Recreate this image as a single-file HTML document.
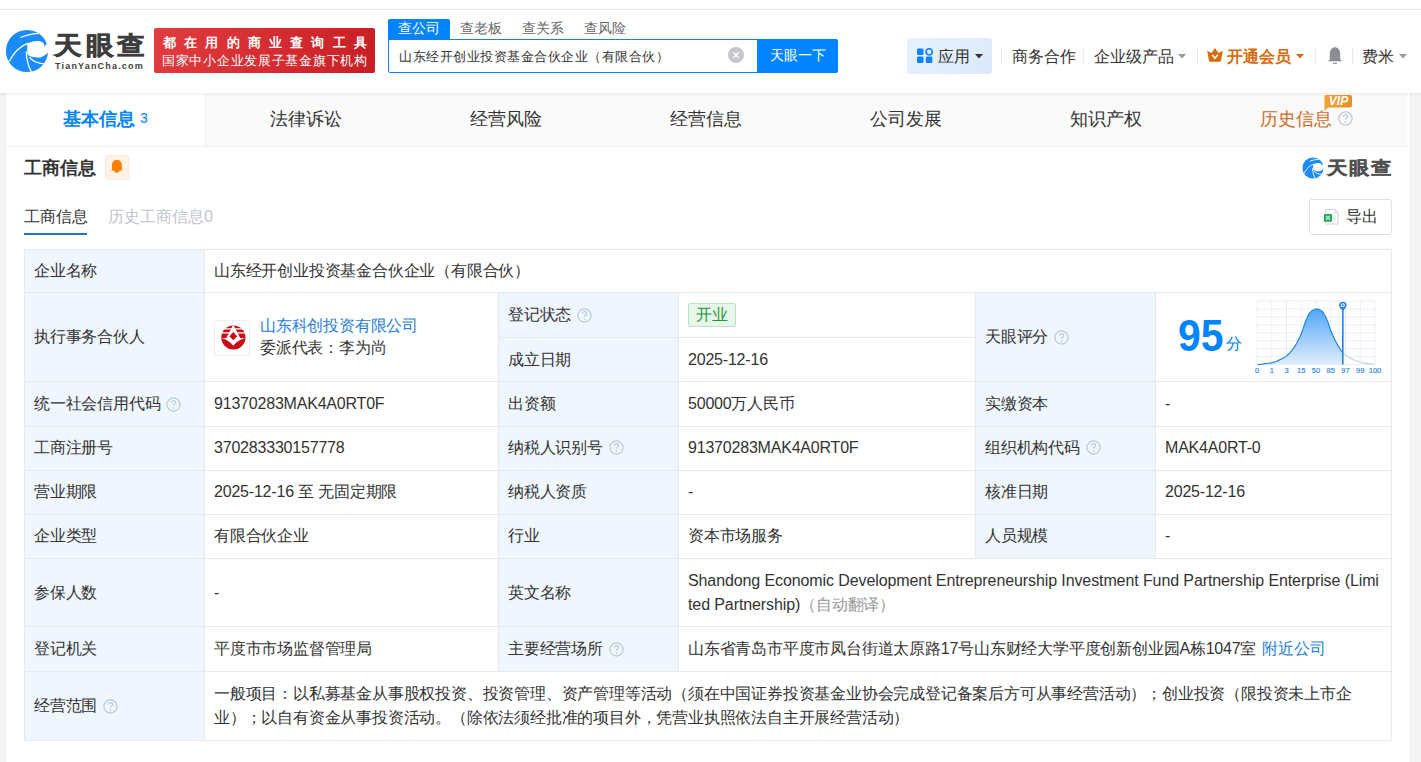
<!DOCTYPE html>
<html><head><meta charset="utf-8">
<style>
*{margin:0;padding:0;box-sizing:border-box}
html,body{width:1421px;height:762px;overflow:hidden;background:#f5f5f5;font-family:"Liberation Sans",sans-serif;color:#333}
.a{position:absolute;white-space:nowrap}
#hdr{position:absolute;left:0;top:0;width:1421px;height:93px;background:#fff;box-shadow:0 1px 4px rgba(0,0,0,.06)}
#topline{position:absolute;left:0;top:9px;width:1421px;height:1px;background:#e8e8e8}
#card{position:absolute;left:6px;top:93px;width:1404px;height:669px;background:#fff}
#rstrip{position:absolute;left:1410px;top:93px;width:11px;height:669px;background:#f5f5f5;border-left:1px solid #ebebeb}
#lstrip{position:absolute;left:5px;top:93px;width:1px;height:669px;background:#ececec}
.tabbar{position:absolute;left:6px;top:93px;width:1401px;height:54px;background:#fafafa;border-bottom:1px solid #f0f0f0}
.tab{position:absolute;top:0;height:53px;width:200px;text-align:center;font-size:18px;line-height:53px;color:#333}
.c{position:absolute;border:1px solid #e3eaf0;font-size:16px;letter-spacing:-0.2px;line-height:24px;color:#333;white-space:nowrap;display:flex;align-items:center;padding-left:9px}
.plogo{width:36px;height:36px;border:1px solid #eee;border-radius:4px;display:flex;align-items:center;justify-content:center;margin-right:10px;margin-top:1px}
.pinfo{line-height:22px}
.tag{display:inline-block;height:24px;line-height:22px;padding:0 7px;background:#e7f7ea;border:1px solid #b8e5c2;border-radius:2px;color:#1d9a3c}
.ml{line-height:24px}
.qi{margin-left:6px;flex:none}
.l{background:#eff6fd}
.q{display:inline-block;width:14px;height:14px;border:1px solid #b9cde1;border-radius:50%;font-size:10px;line-height:12px;text-align:center;color:#b9cde1;vertical-align:middle}
</style></head><body>
<div id="hdr"></div>
<div id="topline"></div>

<!-- logo -->
<svg class="a" style="left:3px;top:27px" width="48" height="48" viewBox="0 0 48 48">
<circle cx="24" cy="24" r="21.1" fill="#1a8cff"/>
<path d="M24.9,16.3 C29,14.5 32.5,13.8 35.2,14.1 C38,14.4 40.5,15.5 41.2,17.2 Q41.6,18.6 41.1,20.4 Q42.6,18.2 43.8,16.6 L47,16 L47,22.4 C45.6,25.2 44,26.8 42.6,27.6 C41,29 39,30.2 37.4,30.4 C34,30.7 31.5,30.4 30.1,30 C28.5,29.6 27.2,29.3 26.4,28.8 C24.8,27.8 24.2,26.9 24.2,25.9 L24.2,17.8 Z" fill="#fff"/>
<g fill="none" stroke="#fff" stroke-width="1.25">
<path d="M6.4,34.2 Q11,26 14.6,22.8 Q19,18.5 25.2,16.2"/>
<path d="M17.4,10.5 Q25,7.2 35.5,6.4"/>
<path d="M23.2,24.5 Q23.4,31 24.9,36.2 Q26,40.5 28.4,45"/>
<path d="M26.4,30.2 Q29,33.5 32.3,34.8 Q36,36.5 41.5,37"/>
</g>
</svg>
<div class="a" style="left:54px;top:30.5px;font-size:28px;line-height:34px;font-weight:bold;color:#3d3d3d;letter-spacing:3.5px;-webkit-text-stroke:0.7px #3d3d3d;transform:scaleY(0.9);transform-origin:0 0">天眼查</div>
<div class="a" style="left:55px;top:60px;font-size:9px;line-height:12px;font-weight:bold;color:#404040;letter-spacing:1.18px">TianYanCha.com</div>

<!-- red banner -->
<div class="a" style="left:154px;top:28px;width:221px;height:45px;border-radius:2px;background:linear-gradient(100deg,#e23c3f,#c81f24)"></div>
<div class="a" style="left:163px;top:34px;font-size:13px;line-height:17px;color:#fff;font-weight:bold;letter-spacing:8.2px">都在用的商业查询工具</div>
<div class="a" style="left:162px;top:52px;font-size:13px;letter-spacing:0.72px;line-height:17px;color:#fff">国家中小企业发展子基金旗下机构</div>

<!-- search -->
<div class="a" style="left:388px;top:19px;width:62px;height:21px;background:#0084ff;border-radius:2px 2px 0 0"></div>
<div class="a" style="left:398px;top:18px;font-size:14px;line-height:20px;color:#fff">查公司</div>
<div class="a" style="left:460px;top:18px;font-size:14px;line-height:20px;color:#666">查老板</div>
<div class="a" style="left:522px;top:18px;font-size:14px;line-height:20px;color:#666">查关系</div>
<div class="a" style="left:584px;top:18px;font-size:14px;line-height:20px;color:#666">查风险</div>
<div class="a" style="left:388px;top:39px;width:372px;height:34px;border:1px solid #1a7fe0;border-radius:0 0 0 2px;background:#fff"></div>
<div class="a" style="left:399px;top:47px;font-size:13px;letter-spacing:0.5px;line-height:20px;color:#333">山东经开创业投资基金合伙企业（有限合伙）</div>
<div class="a" style="left:728px;top:47px;width:16px;height:16px;border-radius:50%;background:#c5c6ca"></div>
<svg class="a" style="left:728px;top:47px" width="16" height="16"><path d="M5,5 L11,11 M11,5 L5,11" stroke="#fff" stroke-width="1.3"/></svg>
<div class="a" style="left:757px;top:39px;width:81px;height:34px;background:#0084ff;border-radius:0 2px 2px 0"></div>
<div class="a" style="left:770px;top:45px;font-size:14px;line-height:20px;color:#fff">天眼一下</div>

<!-- right nav -->
<div class="a" style="left:907px;top:38px;width:85px;height:36px;background:linear-gradient(135deg,#e6f1fd 0%,#e1edfc 60%,#dbe8fb 100%);border-radius:3px"></div>
<svg class="a" style="left:917px;top:48px" width="16" height="16" viewBox="0 0 16 16">
<rect x="0" y="0.5" width="6.5" height="6.5" rx="1.2" fill="#0a84ff"/>
<circle cx="12.2" cy="3.8" r="3.1" fill="none" stroke="#0a84ff" stroke-width="1.5"/>
<rect x="0" y="8.5" width="6.5" height="6.5" rx="1.2" fill="#0a84ff"/>
<rect x="8.8" y="8.5" width="6.5" height="6.5" rx="1.2" fill="#0a84ff"/>
</svg>
<div class="a" style="left:938px;top:45.5px;font-size:16px;line-height:22px;color:#333">应用</div>
<svg class="a" style="left:975px;top:54px" width="8" height="5"><path d="M0,0 L8,0 L4,4.5Z" fill="#333"/></svg>
<div class="a" style="left:1001px;top:49px;width:1px;height:14px;background:#e8e8e8"></div>
<div class="a" style="left:1012px;top:45.5px;font-size:16px;line-height:22px;color:#333">商务合作</div>
<div class="a" style="left:1083px;top:49px;width:1px;height:14px;background:#e8e8e8"></div>
<div class="a" style="left:1094px;top:45.5px;font-size:16px;line-height:22px;color:#333">企业级产品</div>
<svg class="a" style="left:1178px;top:54px" width="8" height="5"><path d="M0,0 L8,0 L4,4.5Z" fill="#999"/></svg>
<div class="a" style="left:1197px;top:49px;width:1px;height:14px;background:#e8e8e8"></div>
<svg class="a" style="left:1207px;top:48px" width="16" height="14" viewBox="0 0 16 14">
<path d="M0.2,2.8 L4.5,5 L8,0 L11.5,5 L15.8,2.8 L14.2,12 Q14,13.8 12.5,13.8 L3.5,13.8 Q2,13.8 1.8,12 Z" fill="#d96a0b"/>
<path d="M5.2,6.8 L8,10.2 L10.8,6.8" fill="none" stroke="#fff" stroke-width="1.6"/>
</svg>
<div class="a" style="left:1227px;top:45.5px;font-size:16px;line-height:22px;color:#d96a0b;font-weight:bold">开通会员</div>
<svg class="a" style="left:1296px;top:54px" width="8" height="5"><path d="M0,0 L8,0 L4,4.5Z" fill="#d96a0b"/></svg>
<div class="a" style="left:1315px;top:49px;width:1px;height:14px;background:#e8e8e8"></div>
<svg class="a" style="left:1327px;top:46px" width="16" height="19" viewBox="0 0 16 19">
<path d="M8,0.5 L8.8,1.6 C12,2.2 13.2,5 13.2,8 L13.2,13.5 L15.2,15.3 L0.8,15.3 L2.8,13.5 L2.8,8 C2.8,5 4,2.2 7.2,1.6 Z" fill="#8a8e94"/>
<rect x="6.2" y="16.6" width="3.6" height="1.3" fill="#8a8e94"/>
</svg>
<div class="a" style="left:1352px;top:49px;width:1px;height:14px;background:#e8e8e8"></div>
<div class="a" style="left:1362px;top:45.5px;font-size:16px;line-height:22px;color:#333">费米</div>
<svg class="a" style="left:1399px;top:54px" width="8" height="5"><path d="M0,0 L8,0 L4,4.5Z" fill="#999"/></svg>

<!-- content card -->
<div id="lstrip"></div>
<div id="card"></div>
<div id="rstrip"></div>
<div class="tabbar">
 <div class="tab" style="left:0;background:#fff;border-right:1px solid #f0f0f0;width:200px;color:#0084ff;font-weight:bold">基本信息<span style="font-size:14px;font-weight:normal;margin-left:5px;position:relative;top:-2px">3</span></div>
 <div class="tab" style="left:200px">法律诉讼</div>
 <div class="tab" style="left:400px">经营风险</div>
 <div class="tab" style="left:600px">经营信息</div>
 <div class="tab" style="left:800px">公司发展</div>
 <div class="tab" style="left:1000px">知识产权</div>
 <div class="tab" style="left:1200px;color:#d2691e">历史信息<svg width="15" height="15" viewBox="0 0 15 15" style="margin-left:6px;vertical-align:-1px"><circle cx="7.5" cy="7.5" r="6.6" fill="none" stroke="#c3c8ce" stroke-width="1.3"/><path d="M5.4,5.6 Q5.5,3.6 7.5,3.6 Q9.6,3.6 9.6,5.5 Q9.6,6.7 8.3,7.3 Q7.5,7.7 7.5,8.8" fill="none" stroke="#c3c8ce" stroke-width="1.2"/><circle cx="7.5" cy="10.9" r="0.8" fill="#c3c8ce"/></svg></div>
</div>
<!-- VIP badge -->
<svg class="a" style="left:1322px;top:94px" width="31" height="18" viewBox="0 0 31 18">
<defs><linearGradient id="vg" x1="0" y1="0" x2="1" y2="0"><stop offset="0" stop-color="#f3a132"/><stop offset="1" stop-color="#e6902a"/></linearGradient></defs>
<path d="M4,1 L28,1 Q30,1 30,3 L30,11.5 Q30,13.5 28,13.5 L6,13.5 L2.5,17 L2.5,3 Q2.5,1 4,1Z" fill="url(#vg)"/>
<text x="16.5" y="11.2" font-family="Liberation Sans" font-size="12" font-weight="bold" font-style="italic" fill="#fff" text-anchor="middle">VIP</text>
</svg>

<!-- section title -->
<div class="a" style="left:24px;top:155.5px;font-size:18px;line-height:24px;font-weight:bold;color:#333">工商信息</div>
<div class="a" style="left:105px;top:155px;width:24px;height:25px;background:#fff3e8;border:1px solid #fbeadc;border-radius:3px"></div>
<svg class="a" style="left:110px;top:159px" width="14" height="15" viewBox="0 0 14 15">
<path d="M6.9,0.8 C10.3,0.9 11.9,3.5 11.9,6.5 L11.9,10.6 L12.8,11.6 L10,11.6 Q8.8,13.8 6.9,13.8 Q5,13.8 3.8,11.6 L1,11.6 L2,10.6 L2,6.5 C2,3.5 3.6,0.9 6.9,0.8Z" fill="#ff8000"/>
</svg>

<!-- small logo right -->
<svg class="a" style="left:1301px;top:156px" width="24" height="24" viewBox="0 0 48 48">
<circle cx="24" cy="24" r="21.1" fill="#1a8cff"/>
<path d="M24.9,16.3 C29,14.5 32.5,13.8 35.2,14.1 C38,14.4 40.5,15.5 41.2,17.2 Q41.6,18.6 41.1,20.4 Q42.6,18.2 43.8,16.6 L47,16 L47,22.4 C45.6,25.2 44,26.8 42.6,27.6 C41,29 39,30.2 37.4,30.4 C34,30.7 31.5,30.4 30.1,30 C28.5,29.6 27.2,29.3 26.4,28.8 C24.8,27.8 24.2,26.9 24.2,25.9 L24.2,17.8 Z" fill="#fff"/>
<g fill="none" stroke="#fff" stroke-width="1.8">
<path d="M6.4,34.2 Q11,26 14.6,22.8 Q19,18.5 25.2,16.2"/>
<path d="M17.4,10.5 Q25,7.2 35.5,6.4"/>
<path d="M23.2,24.5 Q23.4,31 24.9,36.2 Q26,40.5 28.4,45"/>
<path d="M26.4,30.2 Q29,33.5 32.3,34.8 Q36,36.5 41.5,37"/>
</g>
</svg>
<div class="a" style="left:1327px;top:156.5px;font-size:20px;line-height:24px;font-weight:bold;color:#505050;letter-spacing:2.2px;-webkit-text-stroke:0.4px #505050;transform:scaleY(0.88);transform-origin:0 0">天眼查</div>

<!-- sub tabs -->
<div class="a" style="left:24px;top:205.5px;font-size:16px;line-height:22px;color:#333">工商信息</div>
<div class="a" style="left:24px;top:233px;width:63px;height:2px;background:#1f74cc"></div>
<div class="a" style="left:108px;top:205.5px;font-size:16px;line-height:22px;color:#c0c4cc">历史工商信息0</div>

<!-- export -->
<div class="a" style="left:1309px;top:199px;width:83px;height:36px;border:1px solid #dde1e6;border-radius:3px;background:#fff"></div>
<svg class="a" style="left:1323px;top:208px" width="17" height="18" viewBox="0 0 17 18">
<path d="M2.8,1.6 L12,1.6 L15,4.6 L15,16 L2.8,16 Z" fill="#fff" stroke="#cfd2d6" stroke-width="1"/>
<path d="M12,1.6 L12,4.6 L15,4.6" fill="#e8eaec" stroke="#cfd2d6" stroke-width="0.8"/>
<rect x="1" y="5.9" width="8" height="7.8" rx="0.8" fill="#26a460"/>
<path d="M3,7.9 L7,11.7 M7,7.9 L3,11.7" stroke="#c8f5dc" stroke-width="1.2"/>
<path d="M10.3,8.6 L12.6,8.6 M10.3,10.4 L12.6,10.4 M10.3,12.2 L12.6,12.2" stroke="#d6d8db" stroke-width="1"/>
</svg>
<div class="a" style="left:1346px;top:206px;font-size:16px;line-height:22px;color:#333">导出</div>

<div class="a" style="left:0;top:93px;width:1421px;height:5px;background:linear-gradient(rgba(0,0,0,0.05),rgba(0,0,0,0.012) 60%,rgba(0,0,0,0))"></div>
<!-- TABLE -->
<div class="c l" style="left:24px;top:249px;width:181px;height:44px;">企业名称</div>
<div class="c" style="left:204px;top:249px;width:1188px;height:44px;">山东经开创业投资基金合伙企业（有限合伙）</div>
<div class="c l" style="left:24px;top:292px;width:181px;height:90px;">执行事务合伙人</div>
<div class="c" style="left:204px;top:292px;width:295px;height:90px;"><div class="plogo"></div><div class="pinfo"><div style="color:#1f80dc">山东科创投资有限公司</div><div>委派代表：李为尚</div></div></div>
<div class="c l" style="left:498px;top:292px;width:181px;height:46px;">登记状态 <svg class="qi" width="15" height="15" viewBox="0 0 15 15"><circle cx="7.5" cy="7.5" r="6.6" fill="none" stroke="#b6cadd" stroke-width="1.2"/><path d="M5.4,5.6 Q5.5,3.6 7.5,3.6 Q9.6,3.6 9.6,5.5 Q9.6,6.7 8.3,7.3 Q7.5,7.7 7.5,8.8" fill="none" stroke="#b6cadd" stroke-width="1.1"/><circle cx="7.5" cy="10.9" r="0.75" fill="#b6cadd"/></svg></div>
<div class="c" style="left:678px;top:292px;width:298px;height:46px;"><span class="tag">开业</span></div>
<div class="c l" style="left:975px;top:292px;width:181px;height:90px;">天眼评分 <svg class="qi" width="15" height="15" viewBox="0 0 15 15"><circle cx="7.5" cy="7.5" r="6.6" fill="none" stroke="#b6cadd" stroke-width="1.2"/><path d="M5.4,5.6 Q5.5,3.6 7.5,3.6 Q9.6,3.6 9.6,5.5 Q9.6,6.7 8.3,7.3 Q7.5,7.7 7.5,8.8" fill="none" stroke="#b6cadd" stroke-width="1.1"/><circle cx="7.5" cy="10.9" r="0.75" fill="#b6cadd"/></svg></div>
<div class="c" style="left:1155px;top:292px;width:237px;height:90px;"></div>
<div class="c l" style="left:498px;top:337px;width:181px;height:45px;">成立日期</div>
<div class="c" style="left:678px;top:337px;width:298px;height:45px;">2025-12-16</div>
<div class="c l" style="left:24px;top:381px;width:181px;height:46px;">统一社会信用代码 <svg class="qi" width="15" height="15" viewBox="0 0 15 15"><circle cx="7.5" cy="7.5" r="6.6" fill="none" stroke="#b6cadd" stroke-width="1.2"/><path d="M5.4,5.6 Q5.5,3.6 7.5,3.6 Q9.6,3.6 9.6,5.5 Q9.6,6.7 8.3,7.3 Q7.5,7.7 7.5,8.8" fill="none" stroke="#b6cadd" stroke-width="1.1"/><circle cx="7.5" cy="10.9" r="0.75" fill="#b6cadd"/></svg></div>
<div class="c" style="left:204px;top:381px;width:295px;height:46px;">91370283MAK4A0RT0F</div>
<div class="c l" style="left:498px;top:381px;width:181px;height:46px;">出资额</div>
<div class="c" style="left:678px;top:381px;width:298px;height:46px;">50000万人民币</div>
<div class="c l" style="left:975px;top:381px;width:181px;height:46px;">实缴资本</div>
<div class="c" style="left:1155px;top:381px;width:237px;height:46px;">-</div>
<div class="c l" style="left:24px;top:426px;width:181px;height:45px;padding-bottom:2px;">工商注册号</div>
<div class="c" style="left:204px;top:426px;width:295px;height:45px;padding-bottom:2px;">370283330157778</div>
<div class="c l" style="left:498px;top:426px;width:181px;height:45px;padding-bottom:2px;">纳税人识别号 <svg class="qi" width="15" height="15" viewBox="0 0 15 15"><circle cx="7.5" cy="7.5" r="6.6" fill="none" stroke="#b6cadd" stroke-width="1.2"/><path d="M5.4,5.6 Q5.5,3.6 7.5,3.6 Q9.6,3.6 9.6,5.5 Q9.6,6.7 8.3,7.3 Q7.5,7.7 7.5,8.8" fill="none" stroke="#b6cadd" stroke-width="1.1"/><circle cx="7.5" cy="10.9" r="0.75" fill="#b6cadd"/></svg></div>
<div class="c" style="left:678px;top:426px;width:298px;height:45px;padding-bottom:2px;">91370283MAK4A0RT0F</div>
<div class="c l" style="left:975px;top:426px;width:181px;height:45px;padding-bottom:2px;">组织机构代码 <svg class="qi" width="15" height="15" viewBox="0 0 15 15"><circle cx="7.5" cy="7.5" r="6.6" fill="none" stroke="#b6cadd" stroke-width="1.2"/><path d="M5.4,5.6 Q5.5,3.6 7.5,3.6 Q9.6,3.6 9.6,5.5 Q9.6,6.7 8.3,7.3 Q7.5,7.7 7.5,8.8" fill="none" stroke="#b6cadd" stroke-width="1.1"/><circle cx="7.5" cy="10.9" r="0.75" fill="#b6cadd"/></svg></div>
<div class="c" style="left:1155px;top:426px;width:237px;height:45px;padding-bottom:2px;">MAK4A0RT-0</div>
<div class="c l" style="left:24px;top:470px;width:181px;height:45px;padding-bottom:2px;">营业期限</div>
<div class="c" style="left:204px;top:470px;width:295px;height:45px;padding-bottom:2px;">2025-12-16 至 无固定期限</div>
<div class="c l" style="left:498px;top:470px;width:181px;height:45px;padding-bottom:2px;">纳税人资质</div>
<div class="c" style="left:678px;top:470px;width:298px;height:45px;padding-bottom:2px;">-</div>
<div class="c l" style="left:975px;top:470px;width:181px;height:45px;padding-bottom:2px;">核准日期</div>
<div class="c" style="left:1155px;top:470px;width:237px;height:45px;padding-bottom:2px;">2025-12-16</div>
<div class="c l" style="left:24px;top:514px;width:181px;height:45px;padding-bottom:2px;">企业类型</div>
<div class="c" style="left:204px;top:514px;width:295px;height:45px;padding-bottom:2px;">有限合伙企业</div>
<div class="c l" style="left:498px;top:514px;width:181px;height:45px;padding-bottom:2px;">行业</div>
<div class="c" style="left:678px;top:514px;width:298px;height:45px;padding-bottom:2px;">资本市场服务</div>
<div class="c l" style="left:975px;top:514px;width:181px;height:45px;padding-bottom:2px;">人员规模</div>
<div class="c" style="left:1155px;top:514px;width:237px;height:45px;padding-bottom:2px;">-</div>
<div class="c l" style="left:24px;top:558px;width:181px;height:69px;">参保人数</div>
<div class="c" style="left:204px;top:558px;width:295px;height:69px;">-</div>
<div class="c l" style="left:498px;top:558px;width:181px;height:69px;">英文名称</div>
<div class="c" style="left:678px;top:558px;width:714px;height:69px;"><div class="ml" style="letter-spacing:-0.1px">Shandong Economic Development Entrepreneurship Investment Fund Partnership Enterprise (Limi<br>ted Partnership)<span style="color:#999;letter-spacing:-0.2px">（自动翻译）</span></div></div>
<div class="c l" style="left:24px;top:626px;width:181px;height:46px;">登记机关</div>
<div class="c" style="left:204px;top:626px;width:295px;height:46px;">平度市市场监督管理局</div>
<div class="c l" style="left:498px;top:626px;width:181px;height:46px;">主要经营场所 <svg class="qi" width="15" height="15" viewBox="0 0 15 15"><circle cx="7.5" cy="7.5" r="6.6" fill="none" stroke="#b6cadd" stroke-width="1.2"/><path d="M5.4,5.6 Q5.5,3.6 7.5,3.6 Q9.6,3.6 9.6,5.5 Q9.6,6.7 8.3,7.3 Q7.5,7.7 7.5,8.8" fill="none" stroke="#b6cadd" stroke-width="1.1"/><circle cx="7.5" cy="10.9" r="0.75" fill="#b6cadd"/></svg></div>
<div class="c" style="left:678px;top:626px;width:714px;height:46px;">山东省青岛市平度市凤台街道太原路17号山东财经大学平度创新创业园A栋1047室 <span style="color:#1f80dc;margin-left:6px">附近公司</span></div>
<div class="c l" style="left:24px;top:671px;width:181px;height:70px;">经营范围 <svg class="qi" width="15" height="15" viewBox="0 0 15 15"><circle cx="7.5" cy="7.5" r="6.6" fill="none" stroke="#b6cadd" stroke-width="1.2"/><path d="M5.4,5.6 Q5.5,3.6 7.5,3.6 Q9.6,3.6 9.6,5.5 Q9.6,6.7 8.3,7.3 Q7.5,7.7 7.5,8.8" fill="none" stroke="#b6cadd" stroke-width="1.1"/><circle cx="7.5" cy="10.9" r="0.75" fill="#b6cadd"/></svg></div>
<div class="c" style="left:204px;top:671px;width:1188px;height:70px;"><div class="ml">一般项目：以私募基金从事股权投资、投资管理、资产管理等活动（须在中国证券投资基金业协会完成登记备案后方可从事经营活动）；创业投资（限投资未上市企<br>业）；以自有资金从事投资活动。（除依法须经批准的项目外，凭营业执照依法自主开展经营活动）</div></div>
<svg class="a" style="left:1250px;top:296px" width="136" height="80" viewBox="0 0 136 80">
<defs><linearGradient id="bg1" x1="0" y1="0" x2="0" y2="1"><stop offset="0" stop-color="#52a6f8"/><stop offset="1" stop-color="#e2eefc"/></linearGradient></defs>
<g stroke="#e9eff7" stroke-width="1"><line x1="7.00" y1="5" x2="7.00" y2="68.6"/><line x1="21.75" y1="5" x2="21.75" y2="68.6"/><line x1="36.50" y1="5" x2="36.50" y2="68.6"/><line x1="51.25" y1="5" x2="51.25" y2="68.6"/><line x1="66.00" y1="5" x2="66.00" y2="68.6"/><line x1="80.75" y1="5" x2="80.75" y2="68.6"/><line x1="95.50" y1="5" x2="95.50" y2="68.6"/><line x1="110.25" y1="5" x2="110.25" y2="68.6"/><line x1="125.00" y1="5" x2="125.00" y2="68.6"/><line x1="7" y1="5.00" x2="125" y2="5.00"/><line x1="7" y1="12.95" x2="125" y2="12.95"/><line x1="7" y1="20.90" x2="125" y2="20.90"/><line x1="7" y1="28.85" x2="125" y2="28.85"/><line x1="7" y1="36.80" x2="125" y2="36.80"/><line x1="7" y1="44.75" x2="125" y2="44.75"/><line x1="7" y1="52.70" x2="125" y2="52.70"/><line x1="7" y1="60.65" x2="125" y2="60.65"/><line x1="7" y1="68.60" x2="125" y2="68.60"/></g>
<path d="M7.35,68.6 L7.35,68.73 8.08,68.63 9.02,68.51 10.13,68.38 11.39,68.23 12.74,68.06 14.17,67.88 15.62,67.69 17.06,67.49 18.46,67.28 19.78,67.07 20.99,66.85 22.04,66.63 22.96,66.41 23.82,66.18 24.61,65.94 25.36,65.70 26.06,65.45 26.72,65.19 27.36,64.92 27.98,64.65 28.59,64.37 29.20,64.08 29.81,63.79 30.43,63.48 31.05,63.18 31.66,62.89 32.25,62.59 32.82,62.30 33.38,62.00 33.94,61.68 34.49,61.35 35.04,61.00 35.58,60.62 36.13,60.21 36.69,59.77 37.25,59.29 37.82,58.76 38.41,58.21 38.99,57.61 39.58,56.99 40.17,56.35 40.76,55.68 41.34,54.99 41.91,54.29 42.48,53.58 43.03,52.86 43.56,52.14 44.07,51.42 44.57,50.68 45.06,49.91 45.54,49.12 46.01,48.31 46.48,47.49 46.92,46.66 47.36,45.84 47.78,45.02 48.19,44.22 48.58,43.44 48.96,42.69 49.32,41.97 49.65,41.29 49.96,40.65 50.25,40.04 50.52,39.45 50.78,38.87 51.02,38.30 51.26,37.73 51.49,37.15 51.73,36.56 51.97,35.95 52.21,35.31 52.47,34.63 52.72,33.91 52.98,33.16 53.23,32.39 53.48,31.60 53.72,30.79 53.97,29.97 54.23,29.15 54.49,28.33 54.75,27.52 55.03,26.72 55.31,25.94 55.61,25.18 55.92,24.43 56.23,23.67 56.54,22.90 56.86,22.13 57.18,21.37 57.52,20.63 57.86,19.90 58.22,19.20 58.59,18.53 58.98,17.90 59.38,17.32 59.81,16.79 60.26,16.30 60.74,15.83 61.24,15.39 61.75,14.98 62.29,14.61 62.83,14.26 63.38,13.96 63.93,13.70 64.48,13.48 65.03,13.31 65.58,13.19 66.11,13.12 66.64,13.10 67.17,13.12 67.72,13.19 68.26,13.31 68.81,13.47 69.35,13.67 69.89,13.92 70.42,14.20 70.94,14.53 71.44,14.90 71.93,15.30 72.40,15.74 72.85,16.23 73.29,16.78 73.72,17.38 74.13,18.03 74.54,18.72 74.93,19.45 75.31,20.20 75.69,20.97 76.06,21.75 76.42,22.55 76.77,23.34 77.12,24.13 77.47,24.94 77.79,25.77 78.10,26.63 78.41,27.52 78.70,28.41 78.99,29.32 79.28,30.22 79.57,31.13 79.87,32.03 80.17,32.92 80.48,33.78 80.80,34.63 81.13,35.46 81.47,36.29 81.81,37.11 82.16,37.93 82.51,38.74 82.86,39.55 83.22,40.34 83.58,41.12 83.93,41.88 84.29,42.63 84.64,43.36 84.99,44.07 85.35,44.76 85.70,45.44 86.06,46.10 86.41,46.75 86.77,47.39 87.13,48.01 87.48,48.61 87.83,49.20 88.18,49.78 88.52,50.34 88.86,50.88 89.19,51.42 89.51,51.93 89.80,52.41 90.07,52.88 90.34,53.33 90.60,53.76 90.86,54.18 91.14,54.60 91.43,55.01 91.74,55.42 92.08,55.83 92.45,56.24 92.80,56.60 L92.8,68.6 Z" fill="url(#bg1)"/>
<polyline points="7.35,68.73 8.08,68.63 9.02,68.51 10.13,68.38 11.39,68.23 12.74,68.06 14.17,67.88 15.62,67.69 17.06,67.49 18.46,67.28 19.78,67.07 20.99,66.85 22.04,66.63 22.96,66.41 23.82,66.18 24.61,65.94 25.36,65.70 26.06,65.45 26.72,65.19 27.36,64.92 27.98,64.65 28.59,64.37 29.20,64.08 29.81,63.79 30.43,63.48 31.05,63.18 31.66,62.89 32.25,62.59 32.82,62.30 33.38,62.00 33.94,61.68 34.49,61.35 35.04,61.00 35.58,60.62 36.13,60.21 36.69,59.77 37.25,59.29 37.82,58.76 38.41,58.21 38.99,57.61 39.58,56.99 40.17,56.35 40.76,55.68 41.34,54.99 41.91,54.29 42.48,53.58 43.03,52.86 43.56,52.14 44.07,51.42 44.57,50.68 45.06,49.91 45.54,49.12 46.01,48.31 46.48,47.49 46.92,46.66 47.36,45.84 47.78,45.02 48.19,44.22 48.58,43.44 48.96,42.69 49.32,41.97 49.65,41.29 49.96,40.65 50.25,40.04 50.52,39.45 50.78,38.87 51.02,38.30 51.26,37.73 51.49,37.15 51.73,36.56 51.97,35.95 52.21,35.31 52.47,34.63 52.72,33.91 52.98,33.16 53.23,32.39 53.48,31.60 53.72,30.79 53.97,29.97 54.23,29.15 54.49,28.33 54.75,27.52 55.03,26.72 55.31,25.94 55.61,25.18 55.92,24.43 56.23,23.67 56.54,22.90 56.86,22.13 57.18,21.37 57.52,20.63 57.86,19.90 58.22,19.20 58.59,18.53 58.98,17.90 59.38,17.32 59.81,16.79 60.26,16.30 60.74,15.83 61.24,15.39 61.75,14.98 62.29,14.61 62.83,14.26 63.38,13.96 63.93,13.70 64.48,13.48 65.03,13.31 65.58,13.19 66.11,13.12 66.64,13.10 67.17,13.12 67.72,13.19 68.26,13.31 68.81,13.47 69.35,13.67 69.89,13.92 70.42,14.20 70.94,14.53 71.44,14.90 71.93,15.30 72.40,15.74 72.85,16.23 73.29,16.78 73.72,17.38 74.13,18.03 74.54,18.72 74.93,19.45 75.31,20.20 75.69,20.97 76.06,21.75 76.42,22.55 76.77,23.34 77.12,24.13 77.47,24.94 77.79,25.77 78.10,26.63 78.41,27.52 78.70,28.41 78.99,29.32 79.28,30.22 79.57,31.13 79.87,32.03 80.17,32.92 80.48,33.78 80.80,34.63 81.13,35.46 81.47,36.29 81.81,37.11 82.16,37.93 82.51,38.74 82.86,39.55 83.22,40.34 83.58,41.12 83.93,41.88 84.29,42.63 84.64,43.36 84.99,44.07 85.35,44.76 85.70,45.44 86.06,46.10 86.41,46.75 86.77,47.39 87.13,48.01 87.48,48.61 87.83,49.20 88.18,49.78 88.52,50.34 88.86,50.88 89.19,51.42 89.51,51.93 89.80,52.41 90.07,52.88 90.34,53.33 90.60,53.76 90.86,54.18 91.14,54.60 91.43,55.01 91.74,55.42 92.08,55.83 92.45,56.24 92.80,56.60" fill="none" stroke="#1f84e6" stroke-width="1.2"/>
<polyline points="92.80,56.60 92.86,56.66 93.31,57.09 93.78,57.52 94.26,57.95 94.77,58.38 95.30,58.81 95.85,59.23 96.42,59.66 97.02,60.08 97.65,60.49 98.30,60.90 98.98,61.30 99.69,61.70 100.42,62.10 101.17,62.50 101.95,62.90 102.76,63.29 103.58,63.69 104.44,64.07 105.32,64.45 106.23,64.82 107.17,65.17 108.14,65.50 109.15,65.82 110.18,66.11 111.30,66.38 112.55,66.64 113.90,66.89 115.31,67.12 116.75,67.33 118.18,67.54 119.58,67.72 120.90,67.89 122.13,68.05 123.22,68.19 124.15,68.31 124.87,68.42" fill="none" stroke="#cfd4da" stroke-width="1.2"/>
<line x1="92.8" y1="8" x2="92.8" y2="68.6" stroke="#1f84e6" stroke-width="1.6"/>
<path d="M89,9.5 A3.8,3.8 0 1 1 96.6,9.5 Q96.2,11.5 92.8,15 Q89.4,11.5 89,9.5 Z" fill="#1f84e6"/>
<circle cx="92.8" cy="9.3" r="2" fill="#fff"/><circle cx="92.8" cy="9.3" r="1" fill="#1f84e6"/>
<g font-family="Liberation Sans" font-size="7.5" fill="#2f86e0" stroke="#2f86e0" stroke-width="0.15"><text x="7.00" y="76.5" text-anchor="middle">0</text><text x="21.75" y="76.5" text-anchor="middle">1</text><text x="36.50" y="76.5" text-anchor="middle">3</text><text x="51.25" y="76.5" text-anchor="middle">15</text><text x="66.00" y="76.5" text-anchor="middle">50</text><text x="80.75" y="76.5" text-anchor="middle">85</text><text x="95.50" y="76.5" text-anchor="middle">97</text><text x="110.25" y="76.5" text-anchor="middle">99</text><text x="125.00" y="76.5" text-anchor="middle">100</text></g>
</svg>
<div class="a" style="left:1178px;top:311px;font-size:44px;line-height:50px;font-weight:bold;color:#0084ff;transform:scaleX(0.93);transform-origin:0 0">95</div>
<div class="a" style="left:1226px;top:333px;font-size:16px;line-height:22px;color:#0084ff">分</div>
<svg class="a" style="left:212px;top:317px" width="40" height="40" viewBox="0 0 40 40">
<circle cx="21.4" cy="20.5" r="12.1" fill="#cc0a14"/>
<path d="M21.3,7.8 L28.3,20.9 L34,21.1 Q27,22 21.3,28.8 Q15.6,22 8.8,21.1 L14.3,20.9 Z" fill="#fff"/>
<path d="M8,11.8 L35,11.8 M8,15.8 L35,15.8" stroke="#fff" stroke-width="1.15"/>
<path d="M21.3,15 L25.2,19.2 L21.3,23.3 L17.4,19.2Z" fill="#cc0a14"/>
</svg>
</body></html>
